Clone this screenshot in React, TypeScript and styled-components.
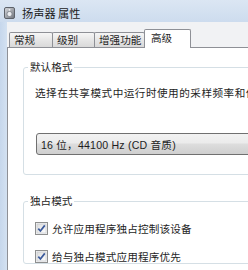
import { createGlobalStyle, styled } from "styled-components"

const GlobalStyle = createGlobalStyle`
  html, body {
    margin: 0;
    padding: 0;
    background: #ffffff;
  }
  body {
    font-family: "Liberation Sans", "Noto Sans CJK SC", sans-serif;
    font-size: 10.6px;
    color: #1e1e1e;
  }
`

type TabPropsType = {
    active?: boolean
    w: number
}

const tabs = [
    { name: "常规", w: 44 },
    { name: "级别", w: 43 },
    { name: "增强功能", w: 51 },
    { name: "高级", w: 47 },
]

const SpeakerIcon = () => (
    <svg width="11" height="12" viewBox="0 0 11 12">
        <defs>
            <linearGradient id="spk" x1="0" y1="0" x2="1" y2="1">
                <stop offset="0" stopColor="#d9dbdf" />
                <stop offset="1" stopColor="#6e737b" />
            </linearGradient>
        </defs>
        <rect x="0.5" y="0.5" width="10" height="11" rx="1.5" fill="url(#spk)" stroke="#5d626a" />
        <circle cx="5.5" cy="7" r="2.6" fill="#eceef1" stroke="#7a7f87" strokeWidth="0.8" />
        <circle cx="5.5" cy="2.8" r="0.9" fill="#f4f5f7" />
    </svg>
)

const CheckMark = () => (
    <svg width="13" height="13" viewBox="0 0 13 13">
        <defs>
            <linearGradient id="cbx" x1="0" y1="0" x2="1" y2="1">
                <stop offset="0" stopColor="#dcdcdc" />
                <stop offset="1" stopColor="#ffffff" />
            </linearGradient>
        </defs>
        <rect x="0.5" y="0.5" width="12" height="12" fill="#f4f4f4" stroke="#8e8f8f" />
        <rect x="2" y="2" width="9" height="9" fill="url(#cbx)" stroke="#c0c3c8" strokeWidth="0.6" />
        <path d="M3.3 6.6 L5.4 9 L9.8 3.4" fill="none" stroke="#3b5a9b" strokeWidth="1.7" />
    </svg>
)

export default function App() {
    return (
        <Window>
            <GlobalStyle />
            <TitleBar>
                <SpeakerIcon />
                <Title>扬声器 属性</Title>
            </TitleBar>
            <Body>
                <Frame />
                <Client>
                    <TabRow>
                        {tabs.map(t => (
                            <Tab key={t.name} w={t.w} active={t.name === "高级"}>
                                {t.name}
                            </Tab>
                        ))}
                    </TabRow>
                    <Panel>
                        <Group>
                            <Legend>默认格式</Legend>
                            <Description>选择在共享模式中运行时使用的采样频率和位深度。</Description>
                            <Dropdown>16 位，44100 Hz (CD 音质)</Dropdown>
                        </Group>
                        <Group second>
                            <Legend>独占模式</Legend>
                            <CheckRow>
                                <CheckMark />
                                <span>允许应用程序独占控制该设备</span>
                            </CheckRow>
                            <CheckRow>
                                <CheckMark />
                                <span>给与独占模式应用程序优先</span>
                            </CheckRow>
                        </Group>
                    </Panel>
                </Client>
            </Body>
        </Window>
    )
}

const Window = styled.div`
  width: 248px;
  height: 270px;
  overflow: hidden;
  display: flex;
  flex-direction: column;
  background: #c8d9ee;
`

const TitleBar = styled.div`
  height: 22px;
  flex-shrink: 0;
  display: flex;
  align-items: center;
  gap: 7px;
  padding-left: 4px;
  padding-top: 3px;
  box-sizing: border-box;
  background: linear-gradient(#dbe6f3, #cddcee);
`

const Title = styled.div`
  font-family: "Noto Sans CJK SC", sans-serif;
  font-size: 11.2px;
  color: #1a1a1a;
`

const Body = styled.div`
  flex: 1;
  display: flex;
  min-height: 0;
`

const Frame = styled.div`
  width: 7px;
  flex-shrink: 0;
  background: linear-gradient(90deg, #c6d7ec, #d3e1f1);
`

const Client = styled.div`
  flex: 1;
  display: flex;
  flex-direction: column;
  background: #f1f2f4;
  padding-top: 7px;
  min-width: 0;
`

const TabRow = styled.div`
  display: flex;
  align-items: flex-end;
  height: 18px;
  padding-left: 2px;
  position: relative;
  z-index: 1;
`

const Tab = styled.div<TabPropsType>`
  box-sizing: border-box;
  width: ${props => props.w}px;
  height: ${props => (props.active ? 19 : 15)}px;
  margin-bottom: ${props => (props.active ? -1 : 0)}px;
  margin-right: -1px;
  padding-left: ${props => (props.active ? 6 : 4)}px;
  padding-top: ${props => (props.active ? 1 : 0)}px;
  border: 1px solid #8e9096;
  border-bottom: none;
  border-radius: 2px 2px 0 0;
  background: ${props =>
        props.active ? "#ffffff" : "linear-gradient(#f6f6f6, #e6e6e6 50%, #d9d9d9)"};
  font-family: "Noto Sans CJK SC", sans-serif;
  font-size: 10.6px;
  line-height: 14px;
  white-space: nowrap;
`

const Panel = styled.div`
  flex: 1;
  width: 330px;
  background: #ffffff;
  border-top: 1px solid #8e9096;
  border-left: 1px solid #8e9096;
  padding-left: 15px;
  display: flex;
  flex-direction: column;
`

type GroupPropsType = {
    second?: boolean
}

const Group = styled.fieldset<GroupPropsType>`
  margin: ${props => (props.second ? 19 : 12)}px 0 0 0;
  padding: ${props => (props.second ? "13px 0 0 11px" : "12px 0 19px 11px")};
  border: 1px solid #d5dfe5;
  border-radius: 3px;
  min-inline-size: 0;
  display: flex;
  flex-direction: column;
  gap: ${props => (props.second ? 14 : 0)}px;
`

const Legend = styled.legend`
  margin-left: -7px;
  padding: 0 2px;
  font-family: "Noto Sans CJK SC", sans-serif;
  font-size: 10.6px;
  line-height: 14px;
  color: #1e1e1e;
`

const Description = styled.div`
  font-family: "Noto Sans CJK SC", sans-serif;
  font-size: 10.6px;
  letter-spacing: 0.5px;
  line-height: 14px;
  white-space: nowrap;
`

const Dropdown = styled.div`
  box-sizing: border-box;
  margin-top: 33px;
  margin-left: 1px;
  height: 22px;
  padding-left: 4px;
  display: flex;
  align-items: center;
  border: 1px solid #707070;
  border-radius: 3px;
  background: linear-gradient(#f2f2f2, #ebebeb 45%, #dddddd 50%, #cfcfcf);
  font-size: 10.6px;
  letter-spacing: 0.2px;
  white-space: nowrap;
`

const CheckRow = styled.label`
  display: flex;
  align-items: center;
  gap: 4px;
  height: 14px;
  font-family: "Noto Sans CJK SC", sans-serif;
  font-size: 10.6px;
  letter-spacing: 0.15px;
  white-space: nowrap;
`
